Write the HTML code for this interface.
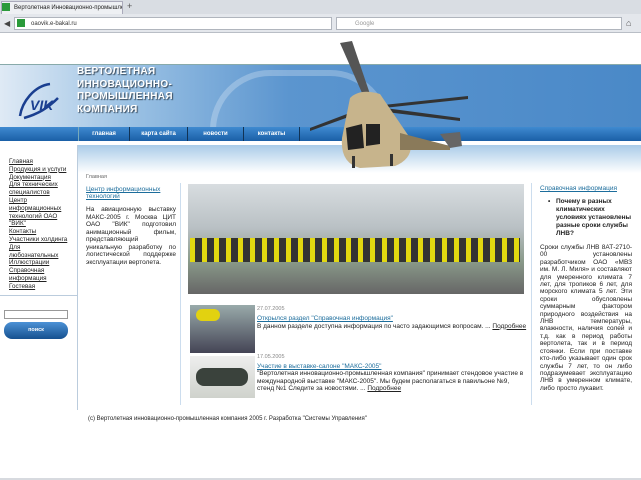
<!DOCTYPE html>
<html><head><meta charset="utf-8"><style>
*{margin:0;padding:0;box-sizing:border-box}
body{width:641px;height:480px;overflow:hidden;background:#fff;font-family:"Liberation Sans","DejaVu Sans",sans-serif;font-size:6.5px;color:#222;position:relative}
.a{position:absolute}
a{color:#222;text-decoration:underline}
.blue{color:#1c6d9c}
p.j{text-align:justify;line-height:7.5px}
</style></head><body>
<div class="a" style="left:0;top:0;width:641px;height:14px;background:#d9dde3"></div>
<div class="a" style="left:1px;top:1px;width:122px;height:13px;background:#eef0f3;border:1px solid #aab;border-bottom:none;font-size:6px;padding:3px 0 0 12px;white-space:nowrap;overflow:hidden">Вертолетная Инновационно-промышленн...</div>
<div class="a" style="left:2px;top:3px;width:8px;height:8px;background:#2a9a3a"></div>
<div class="a" style="left:127px;top:1px;font-size:9px;color:#555">+</div>
<div class="a" style="left:0;top:14px;width:641px;height:19px;background:#e4e7ec;border-bottom:1px solid #b9bec6"></div>
<div class="a" style="left:4px;top:19px;font-size:8px;color:#444">◀</div>
<div class="a" style="left:14px;top:17px;width:318px;height:13px;background:#fff;border:1px solid #b0b5bd;font-size:6px;padding:3px 0 0 16px;color:#333">oaovik.e-bakal.ru</div>
<div class="a" style="left:17px;top:19px;width:8px;height:8px;background:#2a9a3a"></div>
<div class="a" style="left:336px;top:17px;width:286px;height:13px;background:#fff;border:1px solid #b0b5bd;font-size:6px;padding:3px 0 0 18px;color:#999">Google</div>
<div class="a" style="left:626px;top:18px;font-size:9px;color:#555">⌂</div>
<div class="a" style="left:0;top:64px;width:641px;height:64px;background:linear-gradient(90deg,#dfeaf5 0%,#9cc2e4 20%,#5b95cf 45%,#4a89c8 100%);border-top:1px solid #8aa"></div>
<div class="a" style="left:210px;top:70px;width:180px;height:60px;border-radius:90px 90px 0 0;border:6px solid rgba(255,255,255,.25);border-bottom:none"></div>
<svg class="a" style="left:14px;top:78px" width="50" height="48"><path d="M36 6 C20 8 8 24 6 38 M10 40 C24 36 34 30 44 20" stroke="#1a3f90" stroke-width="2.5" fill="none"/><text x="16" y="32" font-family="Liberation Sans" font-weight="bold" font-style="italic" font-size="14" fill="#1a3f90">VIK</text></svg>
<div class="a" style="left:77px;top:66px;color:#fff;font-weight:bold;font-size:10px;line-height:12.5px;letter-spacing:.3px;text-shadow:1px 1px 1px #345">ВЕРТОЛЕТНАЯ<br>ИННОВАЦИОННО-<br>ПРОМЫШЛЕННАЯ<br>КОМПАНИЯ</div>
<div class="a" style="left:0;top:127px;width:641px;height:14px;background:linear-gradient(#3f8ad0,#1a5fa6)"></div>
<div class="a" style="left:78px;top:127px;height:14px;font-size:6px;font-weight:bold;color:#fff;display:flex">
<div style="width:52px;border-left:1px solid #7ab;border-right:1px solid #135;text-align:center;padding-top:4px">главная</div>
<div style="width:58px;border-right:1px solid #135;text-align:center;padding-top:4px">карта сайта</div>
<div style="width:56px;border-right:1px solid #135;text-align:center;padding-top:4px">новости</div>
<div style="width:56px;border-right:1px solid #135;text-align:center;padding-top:4px">контакты</div>
</div>
<div class="a" style="left:78px;top:145px;width:563px;height:28px;background:linear-gradient(#a9cbe8,#fff)"></div>
<svg class="a" style="left:300px;top:38px" width="190" height="130">
<path d="M40 5 L52 3 L72 62 L66 64Z" fill="#555"/>
<path d="M70 68 L160 80 L160 83 L70 72Z" fill="#333"/>
<path d="M68 68 L10 90 L10 93 L68 72Z" fill="#333"/>
<path d="M74 68 L168 58 L168 61 L74 71Z" fill="#333"/>
<path d="M50 60 Q60 50 80 56 L110 100 Q115 120 95 128 L60 130 Q40 125 42 100Z" fill="#c7b48c"/>
<path d="M46 90 L62 86 L64 110 L48 112Z M66 86 L80 86 L80 106 L66 108Z" fill="#222"/>
<path d="M100 95 L150 108 L150 112 L100 112Z" fill="#8a7a5a"/>
<path d="M140 96 L160 94 L162 108 L150 110Z" fill="#666"/>
<rect x="52" y="118" width="3" height="12" fill="#333"/><rect x="90" y="116" width="3" height="12" fill="#333"/>
</svg>
<div class="a" style="left:77px;top:145px;width:1px;height:265px;background:#bcd"></div>
<div class="a" style="left:9px;top:158px;font-size:6.3px;line-height:7.8px">
<a>Главная</a><br><a>Продукция и услуги</a><br><a>Документация</a><br><a>Для технических<br>специалистов</a><br><a>Центр<br>информационных<br>технологий ОАО<br>"ВИК"</a><br><a>Контакты</a><br><a>Участники холдинга</a><br><a>Для<br>любознательных</a><br><a>Иллюстрации</a><br><a>Справочная<br>информация</a><br><a>Гостевая</a></div>
<div class="a" style="left:0;top:295px;width:77px;height:1px;background:#bcd"></div>
<div class="a" style="left:4px;top:310px;width:64px;height:9px;border:1px solid #999"></div>
<div class="a" style="left:4px;top:322px;width:64px;height:17px;border-radius:8px;background:linear-gradient(#4c92d6,#15508f);color:#fff;font-size:5.5px;font-weight:bold;text-align:center;padding-top:5px">поиск</div>
<div class="a" style="left:86px;top:174px;font-size:5.5px;color:#666">Главная</div>
<div class="a" style="left:86px;top:186px;width:90px"><a class="blue" style="font-size:6.5px">Центр информационных технологий</a>
<p class="j" style="margin-top:6px">На авиационную выставку МАКС-2005 г. Москва ЦИТ ОАО "ВИК" подготовил анимационный фильм, представляющий уникальную разработку по логистической поддержке эксплуатации вертолета.</p></div>
<div class="a" style="left:180px;top:183px;width:1px;height:222px;background:#cde"></div>
<div class="a" style="left:188px;top:184px;width:336px;height:110px;background:linear-gradient(#d8dde0,#b9c0c4 40%,#8a9a8a 70%,#666 100%)"></div>
<div class="a" style="left:190px;top:238px;width:330px;height:24px;background:repeating-linear-gradient(90deg,#e2d810 0 5px,#333 5px 12px)"></div>
<div class="a" style="left:190px;top:305px;width:65px;height:48px;background:linear-gradient(#9aa,#445)"></div>
<div class="a" style="left:196px;top:309px;width:24px;height:12px;border-radius:8px;background:#e2d210"></div>
<div class="a" style="left:257px;top:306px;font-size:5.5px;color:#888">27.07.2005</div>
<div class="a" style="left:257px;top:315px;width:270px;line-height:7.5px"><a class="blue">Открылся раздел "Справочная информация"</a><br>В данном разделе доступна информация по часто задающимся вопросам. ... <a>Подробнее</a></div>
<div class="a" style="left:190px;top:356px;width:65px;height:42px;background:linear-gradient(#eee,#cfd2cc)"></div>
<div class="a" style="left:196px;top:368px;width:52px;height:18px;border-radius:8px;background:#3a423c"></div>
<div class="a" style="left:257px;top:354px;font-size:5.5px;color:#888">17.05.2005</div>
<div class="a" style="left:257px;top:363px;width:270px;line-height:7.3px"><a class="blue">Участие в выставке-салоне "МАКС-2005"</a><br>"Вертолетная инновационно-промышленная компания" принимает стендовое участие в международной выставке "МАКС-2005". Мы будем располагаться в павильоне №9, стенд №1 Следите за новостями. ... <a>Подробнее</a></div>
<div class="a" style="left:531px;top:183px;width:1px;height:222px;background:#cde"></div>
<div class="a" style="left:540px;top:185px;width:92px"><a class="blue">Справочная информация</a>
<div style="margin:6px 0 0 16px;font-weight:bold;line-height:8px;font-size:6.5px;position:relative"><span style="position:absolute;left:-8px">•</span>Почему в разных климатических условиях установлены разные сроки службы ЛНВ?</div>
<p class="j" style="margin-top:6px;line-height:7.4px">Сроки службы ЛНВ 8АТ-2710-00 установлены разработчиком ОАО «МВЗ им. М. Л. Миля» и составляют для умеренного климата 7 лет, для тропиков 6 лет, для морского климата 5 лет. Эти сроки обусловлены суммарным фактором природного воздействия на ЛНВ температуры, влажности, наличия солей и т.д. как в период работы вертолета, так и в период стоянки. Если при поставке кто-либо указывает один срок службы 7 лет, то он либо подразумевает эксплуатацию ЛНВ в умеренном климате, либо просто лукавит.</p></div>
<div class="a" style="left:88px;top:416px;font-size:6px">(c) Вертолетная инновационно-промышленная компания 2005 г. Разработка "Системы Управления"</div>
<div class="a" style="left:0;top:478px;width:641px;height:2px;background:#d7dadf"></div>
</body></html>
